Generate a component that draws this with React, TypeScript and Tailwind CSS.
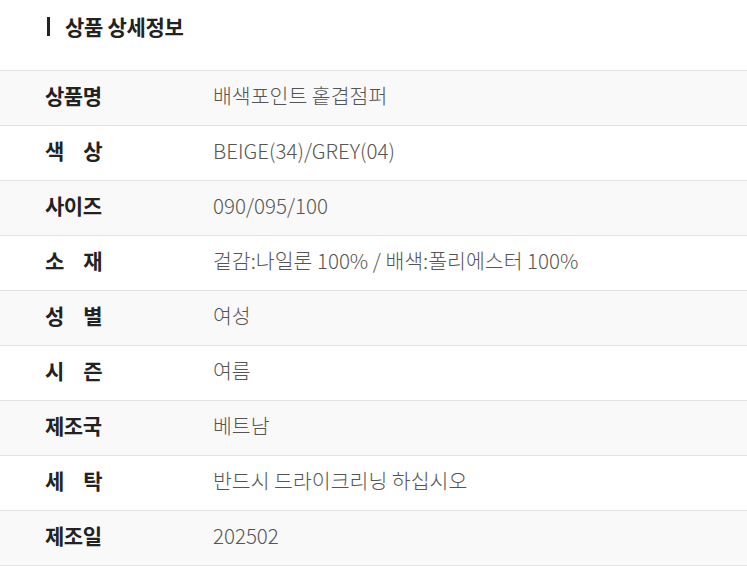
import React from "react";

const rows: [string, string][] = [
  ["상품명", "배색포인트 홑겹점퍼"],
  ["색 상", "BEIGE(34)/GREY(04)"],
  ["사이즈", "090/095/100"],
  ["소 재", "겉감:나일론 100% / 배색:폴리에스터 100%"],
  ["성 별", "여성"],
  ["시 즌", "여름"],
  ["제조국", "베트남"],
  ["세 탁", "반드시 드라이크리닝 하십시오"],
  ["제조일", "202502"],
];

export default function App() {
  return (
    <div
      className="w-[747px] h-[566px] bg-white overflow-hidden"
      style={{ fontFamily: '"Noto Sans CJK KR", "Noto Sans", sans-serif' }}
    >
      <div className="flex items-center h-[57px] pl-[47px] pb-[4px]">
        <span className="w-[3px] h-[19px] bg-[#222]" />
        <span className="ml-[15px] text-[21px] font-bold text-[#222] tracking-[-0.3px] leading-none">
          상품 상세정보
        </span>
      </div>
      <div className="mt-[13px] border-t border-[#e3e3e3]">
        {rows.map(([k, v], i) => (
          <div
            key={i}
            className={`flex items-center h-[55px] pb-[6px] border-b border-[#e3e3e3] ${
              i % 2 === 0 ? "bg-[#f9f9f9]" : "bg-white"
            }`}
          >
            <div className="w-[57px] ml-[45px] text-[21px] font-bold text-[#222] [text-align-last:justify] text-justify leading-none whitespace-nowrap tracking-[-0.5px]">
              {k}
            </div>
            <div className="ml-[111px] text-[20.5px] font-light text-[#555] leading-none">
              {v}
            </div>
          </div>
        ))}
      </div>
    </div>
  );
}
